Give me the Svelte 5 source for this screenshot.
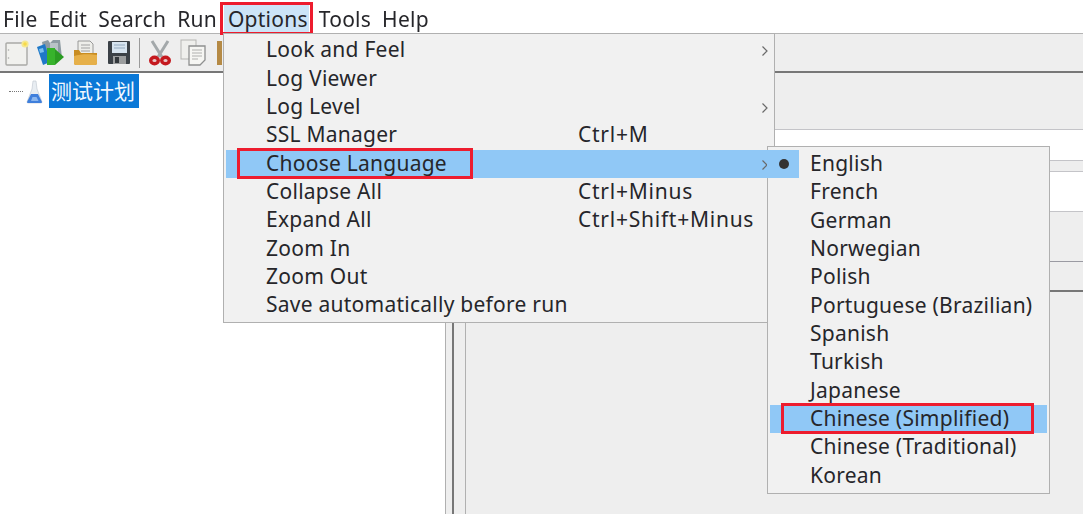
<script>
  const topMenus = ['File', 'Edit', 'Search', 'Run', 'Options', 'Tools', 'Help'];

  const optionItems = [
    { label: 'Look and Feel', arrow: true },
    { label: 'Log Viewer' },
    { label: 'Log Level', arrow: true },
    { label: 'SSL Manager', shortcut: 'Ctrl+M' },
    { label: 'Choose Language', arrow: true, active: true },
    { label: 'Collapse All', shortcut: 'Ctrl+Minus' },
    { label: 'Expand All', shortcut: 'Ctrl+Shift+Minus' },
    { label: 'Zoom In' },
    { label: 'Zoom Out' },
    { label: 'Save automatically before run' }
  ];

  const languages = [
    'English', 'French', 'German', 'Norwegian', 'Polish', 'Portuguese (Brazilian)',
    'Spanish', 'Turkish', 'Japanese', 'Chinese (Simplified)', 'Chinese (Traditional)', 'Korean'
  ];
</script>

<div class="app">
  <nav class="menubar">
    {#each topMenus as name}
      <span class="top-item" class:open={name === 'Options'}>
        {name}
        {#if name === 'Options'}<i class="mark"></i>{/if}
      </span>
    {/each}
  </nav>

  <div class="toolbar">
    <svg class="tool new" width="24" height="26" viewBox="0 0 24 26">
      <rect x="1" y="3" width="21" height="22" rx="1" fill="#f1f1ee" stroke="#a9a9a6" stroke-width="1.400"/>
      <circle cx="3.500" cy="10" r=".8" fill="#aaa"/>
      <circle cx="3.500" cy="18" r=".8" fill="#aaa"/>
      <circle cx="20" cy="4" r="3.600" fill="#f5e88e"/>
      <circle cx="20" cy="4" r="1.800" fill="#f7d94a"/>
    </svg>
    <svg class="tool books" width="27" height="27" viewBox="0 0 27 27">
      <path d="M5 3l6-2 2 3 3-3 7 0 2 18H8z" fill="#8d9ba3"/>
      <path d="M13 4h8v13h-8z" fill="#b9c3c8"/>
      <path d="M0 8l8-3 5 18-7 3z" fill="#1f78c8"/>
      <path d="M2 10l4-1 1 4-4 1z" fill="#7cc0ee"/>
      <path d="M10 9h8v17h-8z" fill="#37b32c"/>
      <path d="M18 10l9 8-9 8z" fill="#2a9c22"/>
    </svg>
    <svg class="tool folder" width="25" height="26" viewBox="0 0 25 26">
      <path d="M5 1h12l3 3v11H5z" fill="#eeeeea" stroke="#8f8f8f" stroke-width=".9"/>
      <path d="M8 5h9M8 8h9M8 11h9" stroke="#a0a0a0"/>
      <path d="M1 10h5l2 3h16v10a2 2 0 0 1-2 2H3a2 2 0 0 1-2-2z" fill="#c98d22"/>
      <path d="M1 16c6-2 16-2 23-1v8a2 2 0 0 1-2 2H3a2 2 0 0 1-2-2z" fill="#e6b04a"/>
    </svg>
    <svg class="tool floppy" width="24" height="25" viewBox="0 0 24 25">
      <path d="M1 2a1 1 0 0 1 1-1h20a1 1 0 0 1 1 1v21a1 1 0 0 1-1 1H2a1 1 0 0 1-1-1z" fill="#3b4147"/>
      <rect x="5" y="2" width="15" height="11" fill="#d7e4ef"/>
      <path d="M7 5h11M7 8h11" stroke="#93aac0"/>
      <rect x="6" y="16" width="13" height="8" fill="#9b9d9e"/>
      <rect x="8" y="17" width="4" height="6" fill="#33383c"/>
    </svg>
    <span class="sep"></span>
    <svg class="tool scissors" width="22" height="26" viewBox="0 0 22 26">
      <path d="M3 1l10 16M19 1L9 17" stroke="#a3a8aa" stroke-width="3" fill="none"/>
      <ellipse cx="5.500" cy="20.500" rx="3.800" ry="3.200" fill="#e8c8c8" stroke="#c4181e" stroke-width="3.400"/>
      <ellipse cx="16.500" cy="20.500" rx="3.800" ry="3.200" fill="#e8c8c8" stroke="#c4181e" stroke-width="3.400"/>
    </svg>
    <svg class="tool copy" width="27" height="27" viewBox="0 0 27 27">
      <rect x="1" y="1" width="15" height="19" fill="#efefec" stroke="#b5b5b2"/>
      <path d="M9 7h16v14l-5 5H9z" fill="#f6f6f3" stroke="#8f9090" stroke-width="1.300"/>
      <path d="M12 11h10M12 14h10M12 17h10M12 20h6" stroke="#b0b0ae"/>
    </svg>
    <span class="paste-edge"></span>
  </div>

  <div class="workspace">
    <aside class="tree">
      <span class="dots"></span>
      <svg class="flask" width="19" height="24" viewBox="0 0 19 24">
        <path d="M8 1h3l1 8 5 13a1 1 0 0 1-1 1H3a1 1 0 0 1-1-1L7 9z" fill="#e8edf2" stroke="#c4ccd4" stroke-width=".7"/>
        <path d="M6 14h7l4 8a1 1 0 0 1-1 1H3a1 1 0 0 1-1-1z" fill="#3f7fdc"/>
        <path d="M7.500 17h4l2 4H6z" fill="#8ab6ee"/>
      </svg>
      <span class="tree-label">测试计划</span>
    </aside>
    <div class="splitter"></div>
    <section class="detail">
      <div class="band head"></div>
      <div class="band field-a"></div>
      <div class="band strip"></div>
      <div class="band field-b"></div>
      <div class="band grey-a"></div>
      <div class="band grey-b"></div>
      <div class="band rest"></div>
    </section>
  </div>

  <div class="menu options">
    {#each optionItems as item}
      <div class="row" class:active={item.active}>
        <span class="label">{item.label}</span>
        <span class="shortcut">{item.shortcut ?? ''}</span>
        {#if item.arrow}
          <svg class="arrow" width="8" height="12" viewBox="0 0 8 12"><path d="M1.500 1.500L6 6l-4.500 4.500" fill="none" stroke="#6a6a6a" stroke-width="1.200"/></svg>
        {/if}
        {#if item.active}<i class="mark"></i>{/if}
      </div>
    {/each}
  </div>

  <div class="menu languages">
    {#each languages as lang, i}
      <div class="lang" class:active={lang === 'Chinese (Simplified)'}>
        <span class="gutter" class:checked={i === 0}>
          {#if i === 0}<b class="dot"></b>{/if}
        </span>
        <span>{lang}</span>
        {#if lang === 'Chinese (Simplified)'}<i class="mark"></i>{/if}
      </div>
    {/each}
  </div>
</div>

<style>
  :global(body) {
    margin: 0;
    background: #fff;
  }

  .app {
    position: relative;
    width: 1083px;
    height: 514px;
    overflow: hidden;
    display: flex;
    flex-direction: column;
    font-family: "Noto Sans", "Noto Sans CJK SC", sans-serif;
    font-size: 21px;
    letter-spacing: 0.25px;
    color: #26262a;
    filter: blur(0.35px);
  }

  .mark {
    position: absolute;
    border: 3px solid #ed1c2e;
    box-sizing: border-box;
    pointer-events: none;
  }

  .menubar {
    flex: none;
    height: 34px;
    box-sizing: border-box;
    display: flex;
    align-items: center;
    gap: 11px;
    padding: 5px 0 0 3px;
    background: #fff;
    border-bottom: 1px solid #b4b4b4;
    line-height: 28px;
  }

  .top-item {
    position: relative;
    isolation: isolate;
  }

  .top-item.open::before {
    content: '';
    position: absolute;
    left: -4px;
    right: -1px;
    top: 0;
    bottom: 0;
    background: #cce4f7;
    z-index: -1;
  }

  .top-item .mark {
    left: -8px;
    right: -5px;
    top: -3px;
    bottom: -2px;
  }

  .toolbar {
    height: 39px;
    flex: none;
    box-sizing: border-box;
    display: flex;
    align-items: center;
    padding-left: 4px;
    background: #eee;
    border-bottom: 2px solid #777;
  }

  .tool {
    flex: none;
    display: block;
  }

  .new { margin-left: 1px; }
  .books { margin-left: 8px; }
  .folder { margin-left: 9px; }
  .floppy { margin-left: 9px; }
  .sep {
    flex: none;
    width: 1px;
    height: 30px;
    margin: 0 9px 0 8px;
    background: #9a9a9a;
  }
  .copy { margin-left: 9px; }
  .paste-edge {
    width: 5px;
    height: 24px;
    margin-left: 10px;
    background: #b58a45;
  }

  .workspace {
    flex: 1;
    min-height: 0;
    display: flex;
  }

  .tree {
    width: 445px;
    flex: none;
    box-sizing: border-box;
    background: #fff;
    display: flex;
    align-items: flex-start;
    padding: 1px 0 0 9px;
  }

  .dots {
    width: 14px;
    margin-top: 17px;
    border-top: 1px dotted #777;
  }

  .flask {
    margin: 6px 0 0 2px;
  }

  .tree-label {
    margin-left: 5px;
    padding: 0 4px 0 2px;
    height: 34px;
    line-height: 34px;
    font-size: 21px;
    letter-spacing: 0;
    background: #0a78d7;
    color: #f2f8ff;
  }

  .splitter {
    flex: none;
    width: 21px;
    box-sizing: border-box;
    background: linear-gradient(to right, #eee 6px, #777 6px, #777 8px, #eee 8px);
    border-left: 1px solid #b0b0b0;
    border-right: 1px solid #b0b0b0;
  }

  .detail {
    flex: 1;
    display: flex;
    flex-direction: column;
    background: #eee;
  }

  .band {
    flex: none;
    box-sizing: border-box;
    border-bottom: 1px solid #c4c4c8;
  }

  .head { height: 57px; background: #eee; }
  .field-a { height: 31px; background: #fff; }
  .strip { height: 11px; background: #eee; }
  .field-b { height: 40px; background: #fff; }
  .grey-a { height: 50px; border-color: #9a9aa2; }
  .grey-b { height: 30px; border-bottom: 2px solid #777; }
  .rest { flex: 1; border: 0; }

  .menu {
    position: absolute;
    box-sizing: border-box;
    background: #f1f1f1;
    border: 1px solid #b0b0b0;
  }

  .options {
    left: 223px;
    top: 33px;
    width: 552px;
    height: 290px;
    padding: 2.4px 2px 0;
  }

  .row {
    position: relative;
    height: 28.35px;
    line-height: 27px;
    display: flex;
    padding-left: 40px;
  }

  .row.active {
    background: #90c8f6;
  }

  .label {
    width: 312px;
    flex: none;
  }

  .shortcut {
    letter-spacing: 0.75px;
  }

  .arrow {
    position: absolute;
    left: 535px;
    top: 9px;
  }

  .row .mark {
    left: 11px;
    top: -2px;
    width: 236px;
    height: 31px;
  }

  .languages {
    left: 767px;
    top: 146px;
    width: 283px;
    height: 348px;
    padding: 3px 2px 0;
  }

  .lang {
    position: relative;
    height: 28.35px;
    line-height: 27px;
    display: flex;
  }

  .lang.active {
    background: #90c8f6;
  }

  .gutter {
    width: 40px;
    flex: none;
    position: relative;
  }

  .gutter.checked {
    background: #90c8f6;
    width: 29px;
    margin: 0 11px 0 -3px;
    padding-left: 3px;
  }

  .dot {
    position: absolute;
    left: 12px;
    top: 9px;
    width: 10px;
    height: 10px;
    border-radius: 50%;
    background: #333;
  }

  .lang .mark {
    left: 11px;
    top: -2px;
    width: 253px;
    height: 31px;
  }
</style>
